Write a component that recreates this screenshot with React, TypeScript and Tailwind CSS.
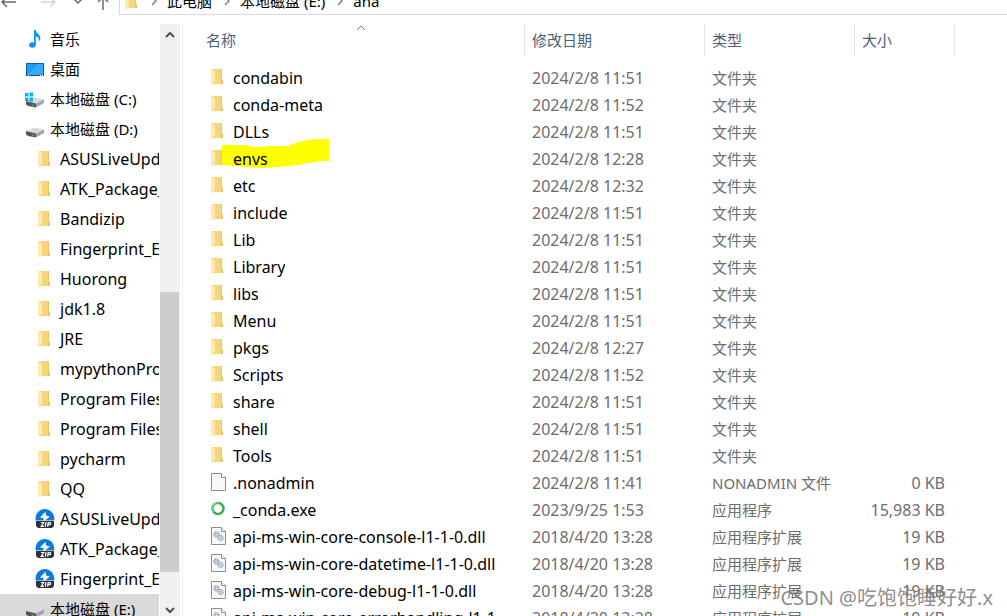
import React from 'react';

type IconKind = 'music' | 'desktop' | 'system' | 'drive' | 'folder' | 'zip' | 'file' | 'exe' | 'dll';

interface TreeItem {
  name: string;
  icon: IconKind;
  nested?: boolean;
  selected?: boolean;
}

interface FileItem {
  name: string;
  date: string;
  type: string;
  size?: string;
  icon: IconKind;
  marked?: boolean;
}

const treeItems: TreeItem[] = [
  { name: '音乐', icon: 'music' },
  { name: '桌面', icon: 'desktop' },
  { name: '本地磁盘 (C:)', icon: 'system' },
  { name: '本地磁盘 (D:)', icon: 'drive' },
  { name: 'ASUSLiveUpdate', icon: 'folder', nested: true },
  { name: 'ATK_Package_V1', icon: 'folder', nested: true },
  { name: 'Bandizip', icon: 'folder', nested: true },
  { name: 'Fingerprint_ELAN', icon: 'folder', nested: true },
  { name: 'Huorong', icon: 'folder', nested: true },
  { name: 'jdk1.8', icon: 'folder', nested: true },
  { name: 'JRE', icon: 'folder', nested: true },
  { name: 'mypythonProject', icon: 'folder', nested: true },
  { name: 'Program Files', icon: 'folder', nested: true },
  { name: 'Program Files', icon: 'folder', nested: true },
  { name: 'pycharm', icon: 'folder', nested: true },
  { name: 'QQ', icon: 'folder', nested: true },
  { name: 'ASUSLiveUpdate', icon: 'zip', nested: true },
  { name: 'ATK_Package_V1', icon: 'zip', nested: true },
  { name: 'Fingerprint_ELAN', icon: 'zip', nested: true },
  { name: '本地磁盘 (E:)', icon: 'drive', selected: true },
];

const files: FileItem[] = [
  { name: 'condabin', date: '2024/2/8 11:51', type: '文件夹', icon: 'folder' },
  { name: 'conda-meta', date: '2024/2/8 11:52', type: '文件夹', icon: 'folder' },
  { name: 'DLLs', date: '2024/2/8 11:51', type: '文件夹', icon: 'folder' },
  { name: 'envs', date: '2024/2/8 12:28', type: '文件夹', icon: 'folder', marked: true },
  { name: 'etc', date: '2024/2/8 12:32', type: '文件夹', icon: 'folder' },
  { name: 'include', date: '2024/2/8 11:51', type: '文件夹', icon: 'folder' },
  { name: 'Lib', date: '2024/2/8 11:51', type: '文件夹', icon: 'folder' },
  { name: 'Library', date: '2024/2/8 11:51', type: '文件夹', icon: 'folder' },
  { name: 'libs', date: '2024/2/8 11:51', type: '文件夹', icon: 'folder' },
  { name: 'Menu', date: '2024/2/8 11:51', type: '文件夹', icon: 'folder' },
  { name: 'pkgs', date: '2024/2/8 12:27', type: '文件夹', icon: 'folder' },
  { name: 'Scripts', date: '2024/2/8 11:52', type: '文件夹', icon: 'folder' },
  { name: 'share', date: '2024/2/8 11:51', type: '文件夹', icon: 'folder' },
  { name: 'shell', date: '2024/2/8 11:51', type: '文件夹', icon: 'folder' },
  { name: 'Tools', date: '2024/2/8 11:51', type: '文件夹', icon: 'folder' },
  { name: '.nonadmin', date: '2024/2/8 11:41', type: 'NONADMIN 文件', size: '0 KB', icon: 'file' },
  { name: '_conda.exe', date: '2023/9/25 1:53', type: '应用程序', size: '15,983 KB', icon: 'exe' },
  { name: 'api-ms-win-core-console-l1-1-0.dll', date: '2018/4/20 13:28', type: '应用程序扩展', size: '19 KB', icon: 'dll' },
  { name: 'api-ms-win-core-datetime-l1-1-0.dll', date: '2018/4/20 13:28', type: '应用程序扩展', size: '19 KB', icon: 'dll' },
  { name: 'api-ms-win-core-debug-l1-1-0.dll', date: '2018/4/20 13:28', type: '应用程序扩展', size: '19 KB', icon: 'dll' },
  { name: 'api-ms-win-core-errorhandling-l1-1-0.dll', date: '2018/4/20 13:28', type: '应用程序扩展', size: '19 KB', icon: 'dll' },
];

const DriveShape: React.FC = () => (
  <>
    <path d="M1 12 9 8.5 19 10.5 11 14.5Z" fill="#d9dadc" />
    <path d="M1 12 11 14.5V18.5L3 17 1 15.5Z" fill="#54575a" />
    <path d="M11 14.5 19 10.5V14L11 18.5Z" fill="#a3a5a8" />
    <path d="M7 15.6 9 16v1L7 16.6Z" fill="#3fd84a" />
  </>
);

const PageShape: React.FC = () => (
  <>
    <path d="M.5 1.5h10l4 4v13H.5Z" fill="#f7f8f8" stroke="#8b8d8f" />
    <path d="M10.5 1.5v4h4" fill="#fff" stroke="#8b8d8f" />
  </>
);

const Gear: React.FC<{ cx: number; cy: number; color: string }> = ({ cx, cy, color }) => (
  <>
    <circle cx={cx} cy={cy} r="2.6" fill="#e8edf1" stroke={color} strokeWidth="1.3" strokeDasharray="1.3 .7" />
    <circle cx={cx} cy={cy} r="1.1" fill="#fff" stroke={color} strokeWidth=".8" />
  </>
);

const ItemIcon: React.FC<{ kind: IconKind }> = ({ kind }) => (
  <svg className="size-5 shrink-0" viewBox="0 0 20 20" aria-hidden="true">
    {kind === 'music' && (
      <>
        <ellipse cx="7.4" cy="16" rx="3.4" ry="2.8" fill="#0a99f5" />
        <path d="M9 1h1.8c.3 3.4 4.6 4.3 4.6 8 0 1.4-.6 2.6-1.5 3.6.6-3-.8-4.4-3.1-5V16H9Z" fill="#0a99f5" />
      </>
    )}
    {kind === 'desktop' && (
      <>
        <path d="M1.5 4.5h17v12h-17Z" fill="#1b9cfb" stroke="#0a5f9e" />
        <path d="M2 16 13 5h5v11Z" fill="#35aaff" />
        <path d="M1 16.5h18" stroke="#07528b" />
        <path d="M3 16.5h1M15 16.5h1M17 16.5h1" stroke="#fff" />
      </>
    )}
    {kind === 'system' && (
      <>
        <DriveShape />
        <path d="M0 4h3.5v3.5H0ZM4.5 3.5H8v4H4.5ZM0 8.5h3.5V12H0ZM4.5 8.5H8v4H4.5Z" fill="#08b3f2" />
      </>
    )}
    {kind === 'drive' && <DriveShape />}
    {kind === 'zip' && (
      <>
        <path d="M.7 11.5C-.4 5.5 4 0 9.8 0s10.500 5.500 9.300 11.500Z" fill="#0b7cdd" />
        <path d="M10.4 2.8 5 8.4l3.7.6-.6 2.5h2L14.8 7.4l-3.7-.8Z" fill="#fff" />
        <path d="M1 12h18v5l-2 2H3l-2-2Z" fill="#303236" />
        <path d="M6 13.5h2.7l-2.5 3.8h2.7M11 13.1l-.7 4.5M12.6 17.6l.6-4h1.6c1.3 0 1 2-.3 2H13" fill="none" stroke="#fff" strokeWidth="1.2" />
      </>
    )}
  </svg>
);

const FolderIcon: React.FC = () => (
  <svg className="h-[18px] w-3 shrink-0" viewBox="0 0 12 18" aria-hidden="true">
    <path d="M1 1h10v11h1v4H1Z" fill="#f6d67c" />
    <path d="M10 1h1v11h1v4h-2Z" fill="#eec55f" />
    <path d="M0 1l4 2v11l-1 .5V18l-3-2Z" fill="#ffe9ac" />
  </svg>
);

const FileIcon: React.FC<{ kind: IconKind }> = ({ kind }) => (
  <svg className="h-5 w-[15px] shrink-0" viewBox="0 0 15 20" aria-hidden="true">
    {kind === 'exe' ? (
      <>
        <circle cx="7" cy="9.5" r="5.5" fill="none" stroke="#3fae4c" strokeWidth="2.6" />
        <path d="M7 4A5.5 5.5 0 0 0 3.5 13.7" fill="none" stroke="#fff" strokeWidth="2.8" strokeDasharray=".7 1.5" opacity=".8" />
      </>
    ) : (
      <PageShape />
    )}
    {kind === 'dll' && (
      <>
        <Gear cx={5.5} cy={8.5} color="#8b9299" />
        <Gear cx={9.5} cy={12} color="#7fa6c6" />
      </>
    )}
  </svg>
);

const Marker: React.FC = () => (
  <svg className="absolute -top-1.5 left-[39px] h-[29px] w-[107px]" viewBox="0 0 107 29" aria-hidden="true">
    <path d="M0 6h25l5 2h13l2-1h22l3-2 16-4 6-1h15v22h-9l-17 3-3 1-15 1-5 1-17 1-16-1-13-1-12-1Z" fill="#ff0" />
  </svg>
);

const Chevron: React.FC<{ className?: string; up?: boolean }> = ({ className, up }) => (
  <svg className={className} viewBox="0 0 10 7" fill="none" stroke="currentColor" aria-hidden="true">
    <path d={up ? 'M1 6l4-4 4 4' : 'M1 1l4 4 4-4'} />
  </svg>
);

const Crumb: React.FC<{ label: string }> = ({ label }) => (
  <>
    <svg className="ml-3 mr-2.5 h-2.5 w-1.5" viewBox="0 0 6 10" fill="none" stroke="#777" strokeWidth="1.3" aria-hidden="true">
      <path d="M1 1l4 4-4 4" />
    </svg>
    <button type="button" className="whitespace-nowrap text-black">{label}</button>
  </>
);

const Toolbar: React.FC = () => (
  <header className="flex h-[15px] shrink-0 items-end overflow-hidden">
    <nav className="flex h-7 w-[119px] shrink-0 items-center text-[#6b6b6b]">
      <button type="button" aria-label="后退">
        <svg className="h-4 w-[17px]" viewBox="0 0 17 16" fill="none" stroke="currentColor" strokeWidth="1.5">
          <path d="M2 9h14M7 4 2 9l5 5" />
        </svg>
      </button>
      <button type="button" aria-label="前进" className="ml-6 text-[#d5d5d5]">
        <svg className="h-4 w-4" viewBox="0 0 16 16" fill="none" stroke="currentColor" strokeWidth="1.5">
          <path d="M0 9h14M9 4l5 5-5 5" />
        </svg>
      </button>
      <button type="button" aria-label="最近浏览的位置" className="ml-4">
        <Chevron className="h-[7px] w-2.5 stroke-[1.5]" />
      </button>
      <button type="button" aria-label="上移" className="ml-3.5">
        <svg className="h-5 w-3" viewBox="0 0 12 20" fill="none" stroke="currentColor" strokeWidth="1.5">
          <path d="M6 6v13M1 11l5-5 5 5" />
        </svg>
      </button>
    </nav>
    <div className="flex h-7 grow items-center border border-r-0 border-[#d9d9d9] pl-[5px]">
      <span className="flex pr-0.5"><FolderIcon /></span>
      <Crumb label="此电脑" />
      <Crumb label="本地磁盘 (E:)" />
      <Crumb label="ana" />
    </div>
  </header>
);

const Sidebar: React.FC = () => (
  <aside className="flex w-[183px] shrink-0 border-r border-[#f0f0f0]">
    <ul className="w-[159px] overflow-hidden">
      {treeItems.map((item, index) => (
        <li key={index} className={item.selected ? 'bg-[#d9d9d9]' : ''}>
          <button
            type="button"
            className={`flex h-[30px] w-full items-center gap-[5px] whitespace-nowrap ${item.nested ? 'pl-[35px] text-base leading-5' : 'pl-[25px]'}`}
          >
            {item.icon === 'folder' ? (
              <span className="flex w-5 shrink-0 pl-[3px]"><FolderIcon /></span>
            ) : (
              <ItemIcon kind={item.icon} />
            )}
            <span>{item.name}</span>
          </button>
        </li>
      ))}
    </ul>
    <div className="ml-px flex w-5 flex-col bg-[#f0f0f0] text-[#505050]">
      <button type="button" aria-label="向上滚动" className="flex h-5 shrink-0 items-center justify-center">
        <Chevron up className="h-[7px] w-2.5 stroke-2" />
      </button>
      <div className="grow-[248]" />
      <div className="w-[19px] grow-[280] bg-[#cdcdcd]" />
      <div className="grow-[32]" />
      <button type="button" aria-label="向下滚动" className="flex h-3 shrink-0 items-center justify-center">
        <Chevron className="h-[7px] w-2.5 stroke-2" />
      </button>
    </div>
  </aside>
);

const headCell = 'flex h-8 items-center border-r border-[#e5e5e5] pl-[7px]';

const FileTable: React.FC = () => (
  <table className="w-full table-fixed whitespace-nowrap text-left">
    <colgroup>
      <col className="w-[342px]" />
      <col className="w-[180px]" />
      <col className="w-[150px]" />
      <col className="w-[100px]" />
      <col />
    </colgroup>
    <thead className="text-[#4c607a]">
      <tr className="h-10 align-top">
        <th className="relative p-0 font-normal">
          <div className="flex h-8 items-center border-r border-[#e5e5e5] pl-[23px]">名称</div>
          <Chevron up className="absolute left-[173px] top-0 h-[7px] w-2.5 text-[#777]" />
        </th>
        <th className="p-0 font-normal"><div className={headCell}>修改日期</div></th>
        <th className="p-0 font-normal"><div className={headCell}>类型</div></th>
        <th className="p-0 font-normal"><div className={headCell}>大小</div></th>
        <td />
      </tr>
    </thead>
    <tbody className="text-[#6d6d6d]">
      {files.map((file) => (
        <tr key={file.name} className="h-[27px]">
          <td className="p-0 text-base leading-5 text-black">
            <div className="relative flex h-[27px] items-center pl-7 pr-1">
              <span className={`flex h-full w-[22px] shrink-0 items-start ${file.icon === 'folder' ? 'pt-1' : 'pt-[3px]'}`}>
                {file.icon === 'folder' ? <FolderIcon /> : <FileIcon kind={file.icon} />}
              </span>
              {file.marked && <Marker />}
              <span className="relative truncate leading-6">{file.name}</span>
            </div>
          </td>
          <td className="p-0 pl-[7px] text-base leading-5">{file.date}</td>
          <td className="p-0 pl-[7px]">{file.type}</td>
          <td className="p-0 pr-2.5 text-right text-base leading-5">{file.size}</td>
          <td />
        </tr>
      ))}
    </tbody>
  </table>
);

const App: React.FC = () => {
  return (
    <div className="relative flex h-screen flex-col overflow-hidden bg-white font-['Noto_Sans','Noto_Sans_CJK_SC',sans-serif] text-[15px] leading-5 text-black">
      <Toolbar />
      <div className="flex min-h-0 grow pt-[9px]">
        <Sidebar />
        <main className="min-w-0 grow overflow-hidden">
          <FileTable />
        </main>
      </div>
      <p className="absolute bottom-1.5 right-3.5 text-xl leading-6 text-[#808080]/90">CSDN @吃饱饱睡好好.x</p>
    </div>
  );
};

export default App;
